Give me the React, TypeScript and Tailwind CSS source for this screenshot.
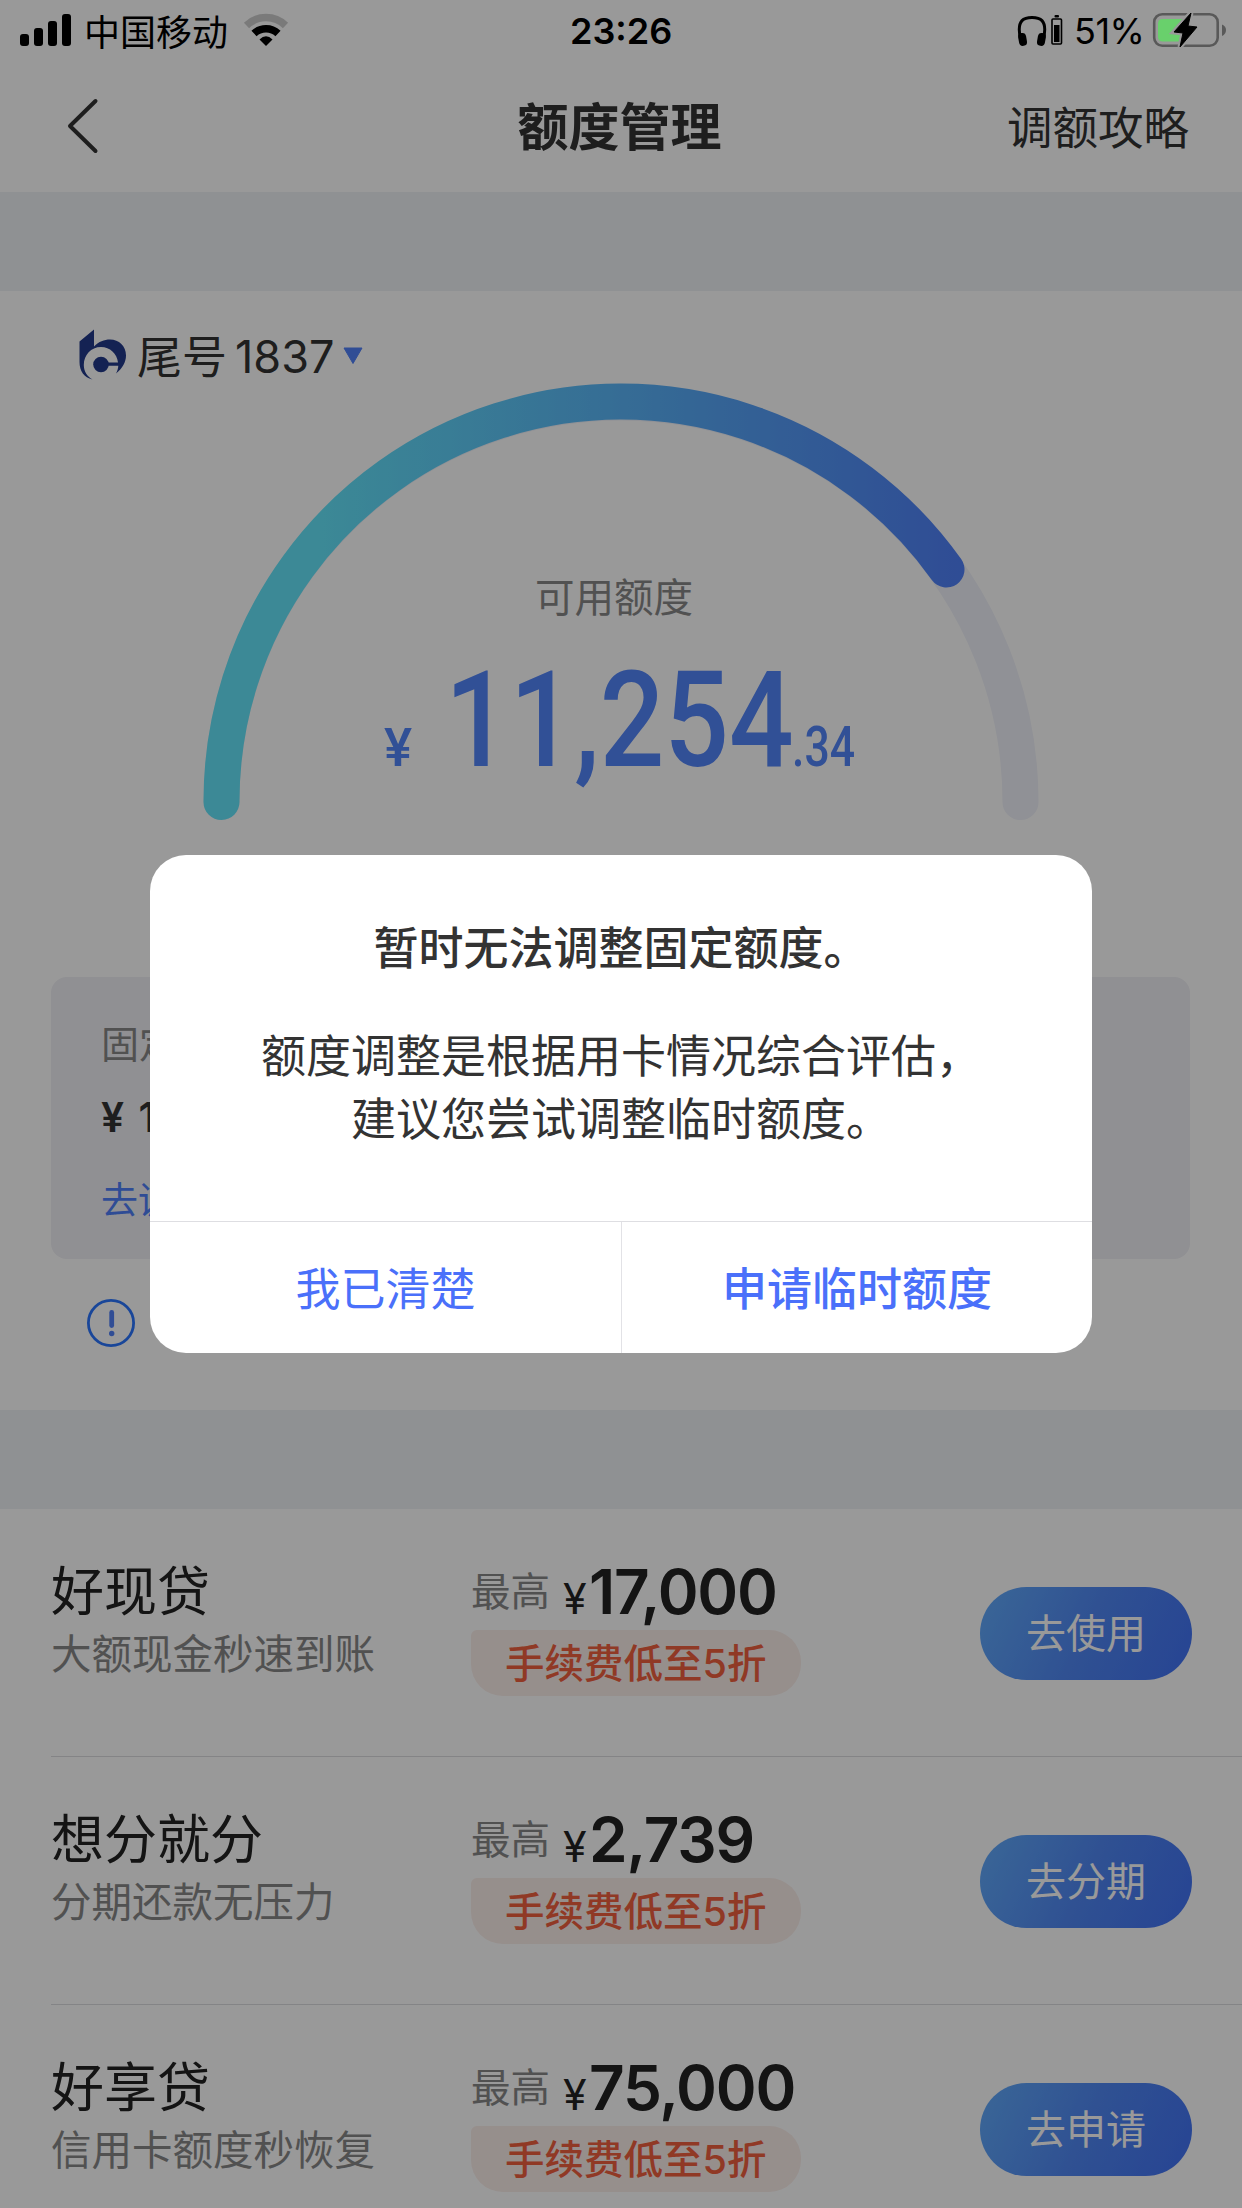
import React from "react";

const CJK = "font-['Noto_Sans_CJK_SC',sans-serif]";
const LATIN = "font-['Inter','Noto_Sans_CJK_SC',sans-serif]";
const DIN = "font-['Roboto',sans-serif]";

function StatusBar() {
  return (
    <div className="flex h-[60px] items-center text-black">
      <svg className="ml-[20px] h-[60px] w-[52px] shrink-0" viewBox="20 0 52 60">
        <rect x="20" y="34" width="9" height="12" rx="3" />
        <rect x="34" y="28" width="9" height="18" rx="3" />
        <rect x="48" y="21" width="9" height="25" rx="3" />
        <rect x="62" y="14" width="9" height="32" rx="3" />
      </svg>
      <div className={`${CJK} ml-[12px] w-[146px] text-[36px] leading-[58px] whitespace-nowrap`}>中国移动</div>
      <svg className="ml-[12px] h-[60px] w-[48px] shrink-0" viewBox="242 0 48 60" fill="none">
        <path d="M246.500 25.500 A28 28 0 0 1 285.500 25.500" stroke="#000" strokeOpacity="0.2" strokeWidth="7.500" />
        <path d="M254 33.500 A17.500 17.500 0 0 1 278 33.500" stroke="#000" strokeWidth="7.500" />
        <path d="M266 46 L259.500 39.500 Q266 33 272.500 39.500 Z" fill="#000" />
      </svg>
      <div className={`${LATIN} w-[662px] pt-[2px] pl-[280px] text-[36px] leading-[60px] font-semibold whitespace-nowrap`}>23:26</div>
    </div>
  );
}

function StatusRight() {
  return (
    <div className="absolute top-0 right-0 flex h-[60px] items-center">
      <svg className="h-[60px] w-[50px]" viewBox="1016 0 50 60" fill="none">
        <path d="M1021 41 C1015 18 1026 17.500 1032 17.500 C1038 17.500 1049 18 1043 41" stroke="#000" strokeWidth="3" />
        <rect x="1018.500" y="33" width="8" height="13" rx="4" fill="#000" transform="rotate(-10 1022 39)" />
        <rect x="1037.500" y="33" width="8" height="13" rx="4" fill="#000" transform="rotate(10 1042 39)" />
        <rect x="1052" y="19" width="9.500" height="25" rx="1" stroke="#000" strokeWidth="1.600" />
        <rect x="1054" y="25" width="5.500" height="17" fill="#000" />
        <rect x="1054.500" y="15" width="4.500" height="2.500" rx="1" fill="#000" />
      </svg>
      <div className={`${LATIN} w-[86px] pt-[2px] pl-[8px] text-[36px] leading-[60px] tracking-[-0.5px]`}>51%</div>
      <svg className="h-[60px] w-[90px]" viewBox="1152 0 90 60" fill="none">
        <rect x="1154.200" y="14.200" width="63.500" height="31.500" rx="8" stroke="#000" strokeOpacity="0.42" strokeWidth="2.600" />
        <path d="M1222 24.500 Q1226 26 1226 30 Q1226 34 1222 36 Z" fill="#000" fillOpacity="0.42" />
        <rect x="1158" y="19" width="28" height="22.500" rx="4.500" fill="#69d06c" />
        <path d="M1191 13 L1174 32 L1183 33 L1180 47 L1197 27 L1188 26 Z" fill="#999" stroke="#999" strokeWidth="5" />
        <path d="M1191 13 L1174 32 L1183 33 L1180 47 L1197 27 L1188 26 Z" fill="#000" stroke="#000" strokeWidth="1" strokeLinejoin="round" />
      </svg>
    </div>
  );
}

function NavBar() {
  return (
    <div className={`${CJK} flex h-[132px] items-center justify-between pr-[53px] pl-[64px] text-[#333]`}>
      <svg className="h-[60px] w-[168px]" viewBox="64 96 168 60" fill="none">
        <path d="M95.500 101 L70 126 L95.500 151" stroke="#333" strokeWidth="4" strokeLinecap="round" strokeLinejoin="round" />
      </svg>
      <div className="pb-[4px] text-[51px] leading-[128px] font-bold">额度管理</div>
      <div className="w-[182px] pb-[3px] text-[45.500px] leading-[128px] whitespace-nowrap">调额攻略</div>
    </div>
  );
}

function Gauge() {
  return (
    <svg className="h-[440px] w-[838px]" viewBox="202 382 838 440" fill="none">
      <defs>
        <linearGradient id="arc" gradientUnits="userSpaceOnUse" x1="203" y1="0" x2="965" y2="0">
          <stop offset="0.150" stopColor="#64e5fa" />
          <stop offset="1" stopColor="#4f7ff8" />
        </linearGradient>
      </defs>
      <path d="M221.500 802 A399.500 399.500 0 0 1 1020.500 802" stroke="#f0f2fa" strokeWidth="36" strokeLinecap="round" />
      <path d="M221.500 802 A399.500 399.500 0 0 1 946.500 569.500" stroke="url(#arc)" strokeWidth="36" strokeLinecap="round" />
    </svg>
  );
}

function BankLogo() {
  return (
    <svg className="h-[52px] w-[48px]" viewBox="0 0 48 52">
      <path d="M0.500 12.500 L15 0.500 V17.500 C20 12.500 25 10.500 31 10.500 C40 10.500 47 17 47 26.500 C47 33 43.500 39.500 37 44.500 C38.500 42 39.200 39 39.300 36.800 H28 V33.500 H39 C38 24.500 31 18 22 18 C12 18 4.800 26 4.800 36 C4.800 42 8 47.500 13.500 50.500 C5 48.500 0.500 42 0.500 33 Z" fill="#22398a" />
      <circle cx="22" cy="35.500" r="7.800" fill="#22398a" />
    </svg>
  );
}

function Account() {
  return (
    <section className="relative h-[1119px] bg-white">
      <div className="flex h-[90px] items-end pl-[79px]">
        <BankLogo />
        <div className={`${CJK} ml-[10px] h-[59px] w-[98px] text-[45px] leading-[66px] text-[#333]`}>尾号</div>
        <div className={`${LATIN} h-[57px] w-[105px] text-[45px] leading-[66px] text-[#333]`}>1837</div>
        <svg className="mb-[16px] ml-[3px] h-[18px] w-[20px]" viewBox="0 0 20 18">
          <path d="M1 1 H19 L10 16.500 Z" fill="#5080f8" stroke="#5080f8" strokeLinejoin="round" />
        </svg>
      </div>
      <div className="absolute top-[91px] left-[202px]">
        <Gauge />
      </div>
      <div className={`${CJK} mt-[184px] pr-[14px] text-center text-[39.500px] leading-[60px] text-[#888]`}>可用额度</div>
      <div className={`${DIN} mt-[36px] flex h-[120px] items-baseline pl-[384px] font-medium text-[#5385fa]`}>
        <span className="w-[61px] origin-left scale-x-[0.98] text-[54px] leading-[120px]">¥</span>
        <span className="w-[347px] origin-left scale-x-[0.855] text-[133px] leading-[120px]">11,254</span>
        <span className="origin-left scale-x-[0.81] text-[55px] leading-[120px]">.34</span>
      </div>
      <div className="mt-[196px] ml-[51px] h-[282px] w-[1139px] rounded-[16px] bg-[#f0f0f5] pl-[50px]">
        <div className={`${CJK} pt-[35px] text-[38px] leading-[60px] text-[#888]`}>固定额度</div>
        <div className={`${LATIN} mt-[15px] text-[41px] leading-[60px] font-semibold [word-spacing:4px] text-[#333]`}>¥ 16,000.00</div>
        <div className={`${CJK} mt-[21px] text-[37px] leading-[60px] text-[#4f7ff8]`}>去调整</div>
      </div>
      <svg className="mt-[39px] ml-[86px] h-[50px] w-[50px]" viewBox="86 1298 50 50" fill="none">
        <circle cx="111" cy="1323" r="22.600" stroke="#2b76ff" strokeWidth="2.800" />
        <path d="M111.700 1312.500 V1325.500" stroke="#5080f8" strokeWidth="4.800" strokeLinecap="round" />
        <circle cx="111.700" cy="1333.500" r="2.700" fill="#5080f8" />
      </svg>
    </section>
  );
}

type Offer = { name: string; note: string; amount: string; action: string };

const offers: Offer[] = [
  { name: "好现贷", note: "大额现金秒速到账", amount: "17,000", action: "去使用" },
  { name: "想分就分", note: "分期还款无压力", amount: "2,739", action: "去分期" },
  { name: "好享贷", note: "信用卡额度秒恢复", amount: "75,000", action: "去申请" },
];

function OfferRow({ offer }: { offer: Offer }) {
  return (
    <div className={`${CJK} ml-[51px] flex h-[248px] border-b border-[#dcdce0] pr-[50px]`}>
      <div className="w-[420px] pt-[46px] whitespace-nowrap">
        <div className="text-[53px] leading-[66px] text-[#222]">{offer.name}</div>
        <div className="pt-[1px] text-[40.500px] leading-[60px] text-[#888]">{offer.note}</div>
      </div>
      <div className="w-[509px] pt-[41px]">
        <div className="flex h-[80px]">
          <span className="w-[92px] text-[39.500px] leading-[78px] text-[#888]">最高</span>
          <div className={`${LATIN} flex items-baseline pt-[2px] text-[#222]`}>
            <span className="w-[26px] text-[43px] leading-[80px]">¥</span>
            <span className="text-[62px] leading-[80px] font-semibold tracking-[-1.2px]">{offer.amount}</span>
          </div>
        </div>
        <div className="h-[66px] w-[330px] rounded-[32px] rounded-tl-[6px] bg-[#fbeeea] pl-[34px] text-[39.500px] leading-[61px] font-medium whitespace-nowrap text-[#f0603f]">
          手续费低至<span className={LATIN}>5</span>折
        </div>
      </div>
      <button className="mt-[78px] h-[93px] w-[212px] rounded-full bg-linear-[115deg] from-[#62acfc] via-[#5087f4] to-[#4172f5] pb-[5px] text-[40px] leading-[84px] text-white">
        {offer.action}
      </button>
    </div>
  );
}

function Dialog() {
  return (
    <div className={`${CJK} flex h-[498px] w-[942px] flex-col overflow-hidden rounded-[36px] bg-white text-center text-[45px] text-[#333]`}>
      <div className="mt-[59px] leading-[63px] font-medium">暂时无法调整固定额度。</div>
      <div className="mt-[45px] leading-[63px]">
        额度调整是根据用卡情况综合评估，
        <br />
        建议您尝试调整临时额度。
      </div>
      <div className="mt-auto grid h-[132px] grid-cols-2 border-t border-[#dedee2] leading-[130px] text-[#4a70fa]">
        <div>我已清楚</div>
        <div className="border-l border-[#e2e2e6] font-medium">申请临时额度</div>
      </div>
    </div>
  );
}

export default function App() {
  return (
    <div className="relative h-[2208px] w-[1242px] overflow-hidden bg-white">
      <StatusBar />
      <NavBar />
      <div className="h-[99px] bg-[#eff2f6]" />
      <Account />
      <div className="h-[99px] bg-[#eff2f6]" />
      {offers.map((offer) => (
        <OfferRow key={offer.name} offer={offer} />
      ))}
      <div className="absolute inset-0 flex items-center justify-center bg-black/40">
        <Dialog />
      </div>
      <StatusRight />
    </div>
  );
}
